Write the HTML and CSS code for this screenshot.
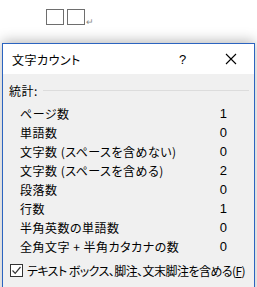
FILE: index.html
```html
<!DOCTYPE html>
<html lang="ja">
<head>
    <meta charset="UTF-8">
    <title>文字カウント</title>
    <link rel="stylesheet" href="styles.css">
</head>
<body>
    <div class="doc">
        <span class="box"></span>
        <span class="box"></span>
        <span class="ret">↵</span>
    </div>

    <div class="dialog">
        <div class="titlebar">
            <span class="title">文字カウント</span>
            <span class="help">?</span>
            <span class="close">
                <svg width="12" height="12" viewBox="0 0 12 12"><path d="M1 1L11 11M11 1L1 11" stroke="#000" stroke-width="1.1"/></svg>
            </span>
        </div>
        <div class="content">
            <div class="group">
                <span>統計:</span>
                <span class="rule"></span>
            </div>
            <div class="stats">
                <div class="row"><span>ページ数</span><span class="num">1</span></div>
                <div class="row"><span>単語数</span><span class="num">0</span></div>
                <div class="row"><span>文字数 (スペースを含めない)</span><span class="num">0</span></div>
                <div class="row"><span>文字数 (スペースを含める)</span><span class="num">2</span></div>
                <div class="row"><span>段落数</span><span class="num">0</span></div>
                <div class="row"><span>行数</span><span class="num">1</span></div>
                <div class="row"><span>半角英数の単語数</span><span class="num">0</span></div>
                <div class="row"><span>全角文字 + 半角カタカナの数</span><span class="num">0</span></div>
            </div>
            <label class="check">
                <span class="cbox">
                    <svg width="11" height="11" viewBox="0 0 11 11"><path d="M1.5 5.5L4.2 8.3L9.5 2" fill="none" stroke="#333" stroke-width="1.2"/></svg>
                </span>
                <span class="check-text">テキスト ボックス、脚注、文末脚注を含める(<u>F</u>)</span>
            </label>
        </div>
    </div>
</body>
</html>
```

FILE: styles.css
```css
body {
    margin: 0;
    padding: 0;
    background-color: #fff;
    color: #000;
    font-family: "Noto Sans CJK JP", "Noto Sans", sans-serif;
    font-size: 12px;
    font-feature-settings: "palt";
    letter-spacing: 0.5px;
    overflow: hidden;
}
.doc {
    display: flex;
    align-items: flex-start;
    gap: 3px;
    height: 34px;
    padding-left: 46px;
    padding-top: 9px;
    box-sizing: border-box;
}
.box {
    width: 16px;
    height: 14px;
    border: 1px solid #6e6e6e;
}
.ret {
    color: #8a8a8a;
    font-size: 9px;
    line-height: 9px;
    margin-top: 8px;
    margin-left: -2px;
}
.dialog {
    margin: 9px 2px 0 2px;
    border: 1px solid #2b64c0;
    border-bottom: none;
    box-shadow: 0 -2px 12px rgba(0, 0, 0, 0.28);
    background-color: #f0f0f0;
    height: 300px;
}
.titlebar {
    height: 30px;
    background-color: #fff;
    display: flex;
    align-items: center;
}
.title {
    margin-left: 9px;
    flex: 1;
}
.help {
    width: 12px;
    margin-right: 34px;
    font-family: "Liberation Sans", sans-serif;
    font-size: 13px;
}
.close {
    display: flex;
    margin-right: 17px;
}
.content {
    padding: 6px 5px 0 6px;
}
.group {
    display: flex;
    align-items: center;
    gap: 5px;
    height: 20px;
}
.rule {
    flex: 1;
    border-top: 1px solid #dcdcdc;
    margin-top: 1px;
}
.stats {
    padding: 4px 22px 0 11px;
}
.row {
    display: flex;
    justify-content: space-between;
    height: 19px;
    line-height: 19px;
}
.num {
    font-family: "Liberation Sans", sans-serif;
    font-size: 13px;
    letter-spacing: 0;
}
.check {
    display: flex;
    align-items: center;
    gap: 4px;
    margin-top: 6px;
    margin-left: 1px;
}
.check-text {
    white-space: nowrap;
    letter-spacing: -0.55px;
}
.cbox {
    width: 11px;
    height: 11px;
    border: 1px solid #333;
    background-color: #fff;
    display: flex;
}
```
